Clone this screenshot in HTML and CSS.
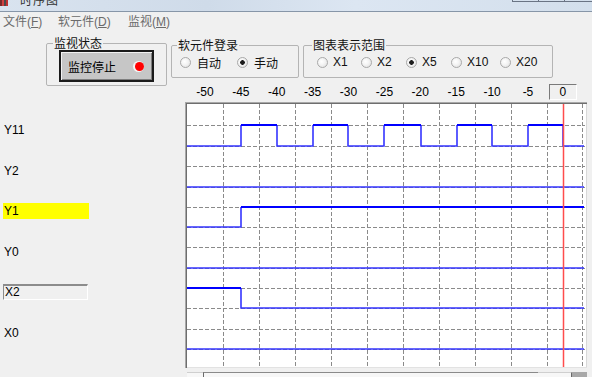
FILE: index.html
```html
<!DOCTYPE html>
<html>
<head>
<meta charset="utf-8">
<link rel="stylesheet" href="styles.css">
</head>
<body>
<div class="win">
  <div class="titlebar">
    <span class="ticon"></span>
    <span class="ttext">时序图</span>
    <span class="tbtns"><i></i><i></i><i></i></span>
  </div>
  <div class="menu">
    <span class="m1">文件(<u>F</u>)</span>
    <span class="m2">软元件(<u>D</u>)</span>
    <span class="m3">监视(<u>M</u>)</span>
  </div>
  <div class="tools">
    <fieldset class="grp g1">
      <legend>监视状态</legend>
      <button class="mon"><span>监控停止</span><span class="led"></span></button>
    </fieldset>
    <fieldset class="grp g2">
      <legend>软元件登录</legend>
      <div class="row">
        <span class="rb"><span class="rc"></span>自动</span>
        <span class="rb"><span class="rc on"></span>手动</span>
      </div>
    </fieldset>
    <fieldset class="grp g3">
      <legend>图表表示范围</legend>
      <div class="row">
        <span class="rb"><span class="rc"></span>X1</span>
        <span class="rb"><span class="rc"></span>X2</span>
        <span class="rb"><span class="rc on"></span>X5</span>
        <span class="rb"><span class="rc"></span>X10</span>
        <span class="rb"><span class="rc"></span>X20</span>
      </div>
    </fieldset>
  </div>
  <div class="main">
    <div class="names">
      <div class="nm">Y11</div>
      <div class="nm">Y2</div>
      <div class="nm sel">Y1</div>
      <div class="nm">Y0</div>
      <div class="nm box">X2</div>
      <div class="nm">X0</div>
    </div>
    <div class="chart">
      <div class="axis">
        <span>-50</span><span>-45</span><span>-40</span><span>-35</span><span>-30</span>
        <span>-25</span><span>-20</span><span>-15</span><span>-10</span><span>-5</span>
        <div class="zero">0</div>
      </div>
      <svg class="plot" width="404" height="266" viewBox="0 0 404 266">
        <rect x="2" y="2" width="399" height="263" fill="#ffffff"/>
        <rect x="0" y="0" width="1" height="266" fill="#a8a8a8"/>
        <rect x="1" y="1" width="1" height="265" fill="#6e6e6e"/>
        <rect x="0" y="0" width="402" height="1" fill="#a8a8a8"/>
        <rect x="1" y="1" width="401" height="1" fill="#6e6e6e"/>
        <rect x="401" y="2" width="1" height="264" fill="#d8d8d8"/>
        <rect x="2" y="265" width="400" height="1" fill="#e2e2e2"/>
        <g stroke="#8a8a8a" stroke-width="1" stroke-dasharray="4 2" shape-rendering="crispEdges">
          <line x1="38.5" y1="2" x2="38.5" y2="265"/>
          <line x1="74.5" y1="2" x2="74.5" y2="265"/>
          <line x1="110.5" y1="2" x2="110.5" y2="265"/>
          <line x1="146.5" y1="2" x2="146.5" y2="265"/>
          <line x1="182.5" y1="2" x2="182.5" y2="265"/>
          <line x1="218.5" y1="2" x2="218.5" y2="265"/>
          <line x1="254.5" y1="2" x2="254.5" y2="265"/>
          <line x1="290.5" y1="2" x2="290.5" y2="265"/>
          <line x1="326.5" y1="2" x2="326.5" y2="265"/>
          <line x1="362.5" y1="2" x2="362.5" y2="265"/>
          <line x1="397.5" y1="2" x2="397.5" y2="265"/>
          <line x1="2" y1="23.5" x2="400" y2="23.5"/>
          <line x1="2" y1="44.5" x2="400" y2="44.5"/>
          <line x1="2" y1="64.5" x2="400" y2="64.5"/>
          <line x1="2" y1="85.5" x2="400" y2="85.5"/>
          <line x1="2" y1="105.5" x2="400" y2="105.5"/>
          <line x1="2" y1="125.5" x2="400" y2="125.5"/>
          <line x1="2" y1="145.5" x2="400" y2="145.5"/>
          <line x1="2" y1="166.5" x2="400" y2="166.5"/>
          <line x1="2" y1="186.5" x2="400" y2="186.5"/>
          <line x1="2" y1="206.5" x2="400" y2="206.5"/>
          <line x1="2" y1="227.5" x2="400" y2="227.5"/>
          <line x1="2" y1="247.5" x2="400" y2="247.5"/>
        </g>
        <g fill="none" stroke="#3535ff" stroke-width="1.6">
          <path d="M2 44 H56 V23 M92 23 V44 H128 V23 M163 23 V44 H199 V23 M236 23 V44 H272 V23 M307 23 V44 H343 V23 M378 23 V44 H399"/>
          <path d="M2 85 H399"/>
          <path d="M2 125 H56 V105"/>
          <path d="M2 166 H399"/>
          <path d="M56 186 V206 H399"/>
          <path d="M2 247 H399"/>
        </g>
        <g fill="none" stroke="#0000ff" stroke-width="2.2">
          <path d="M56 23 H92 M128 23 H163 M199 23 H236 M272 23 H307 M343 23 H378"/>
          <path d="M56 105 H399"/>
          <path d="M2 186 H56"/>
        </g>
        <line x1="378.5" y1="2" x2="378.5" y2="265" stroke="#ff4d4d" stroke-width="1.5"/>
      </svg>
      <div class="hs">
        <span class="hs1"></span><span class="hs2"></span><span class="hs3"></span><span class="hs4"></span>
      </div>
    </div>
  </div>
</div>
</body>
</html>
```
FILE: styles.css
```css
html, body {
  margin: 0;
  padding: 0;
}
body {
  width: 611px;
  height: 384px;
  background: #ffffff;
  overflow: hidden;
  font-family: "Liberation Sans", "Noto Sans CJK SC", sans-serif;
  font-size: 12px;
  color: #000;
}
.win {
  width: 592px;
  height: 377px;
  background: #f0f0f0;
  overflow: hidden;
}
.titlebar {
  height: 11px;
  border-bottom: 1px solid #8796a8;
  background: linear-gradient(90deg, #d9e3ef 0%, #cfdbe9 35%, #dce6f2 60%, #d3dfec 100%);
  display: flex;
  align-items: flex-start;
  overflow: hidden;
}
.ticon {
  width: 8px;
  height: 6px;
  background: linear-gradient(90deg, #7a2a2a 0 2px, #d04040 2px 4px, #4a4a4a 4px 6px, #c03030 6px 8px);
  flex: none;
}
.ttext {
  margin-left: 12px;
  margin-top: -7px;
  font-family: "Noto Sans CJK SC", sans-serif;
  font-size: 12px;
  line-height: 14px;
  color: #333;
  letter-spacing: 1px;
}
.tbtns {
  margin-left: auto;
  display: flex;
}
.tbtns i {
  display: block;
  width: 25px;
  height: 1px;
  border-bottom: 1px solid #6a7484;
  border-left: 1px solid #6a7484;
}
.tbtns i:last-child {
  width: 27px;
}
.menu {
  height: 20px;
  line-height: 20px;
  display: flex;
  padding-left: 3px;
  color: #6b6b6b;
  font-family: "Liberation Sans", "Noto Sans CJK SC", sans-serif;
}
.menu u {
  text-decoration: underline;
}
.m1 { width: 55px; }
.m2 { width: 70px; }
.tools {
  height: 52px;
  box-sizing: border-box;
  padding-top: 4px;
  display: flex;
  align-items: flex-start;
}
.grp {
  margin: 0;
  padding: 0;
  border: 1px solid #b4b4b4;
  border-radius: 2px;
  box-sizing: border-box;
  min-width: 0;
}
.grp legend {
  padding: 0 1px;
  font-family: "Noto Sans CJK SC", sans-serif;
  font-size: 12px;
  line-height: 14px;
  color: #111;
}
.g1 {
  margin-left: 46px;
  width: 121px;
  height: 50px;
  padding-left: 12px;
}
.g1 legend { margin-left: -6px; }
.g2 {
  margin-left: 4px;
  margin-top: 2px;
  width: 128px;
  height: 40px;
  padding: 3px 0 0 8px;
}
.g2 legend { margin-left: -3px; }
.g3 {
  margin-left: 4px;
  margin-top: 2px;
  width: 250px;
  height: 40px;
  padding: 3px 0 0 13px;
}
.g3 legend { margin-left: -5px; }
.row {
  display: flex;
  align-items: center;
  height: 14px;
}
.rb {
  display: flex;
  align-items: center;
  flex: none;
  font-family: "Liberation Sans", "Noto Sans CJK SC", sans-serif;
  color: #111;
}
.g2 .rb { width: 57px; }
.g2 .rc { margin-right: 6px; }
.g3 .rb:nth-child(1) { width: 44px; }
.g3 .rb:nth-child(2) { width: 45px; }
.g3 .rb:nth-child(3) { width: 45px; }
.g3 .rb:nth-child(4) { width: 49px; }
.g3 .rc { margin-right: 5px; }
.rc {
  width: 11px;
  height: 11px;
  box-sizing: border-box;
  border-radius: 50%;
  border: 1px solid #a9a9a9;
  background: radial-gradient(circle at 40% 40%, #ffffff 0, #f4f4f4 40%, #dcdcdc 100%);
  flex: none;
}
.rc.on {
  background: radial-gradient(circle, #1c1c1c 0, #1c1c1c 2px, rgba(0,0,0,0) 2.6px), radial-gradient(circle at 40% 40%, #ffffff 0, #f4f4f4 40%, #dcdcdc 100%);
}
.mon {
  margin: 0;
  width: 95px;
  height: 32px;
  box-sizing: border-box;
  border: 2px solid #1b1b1b;
  background: #c6c6c6;
  box-shadow: inset 1px 1px 0 #f2f2f2, inset -1px -1px 0 #7e7e7e;
  display: flex;
  align-items: center;
  padding: 0 8px 0 7px;
  font-family: "Noto Sans CJK SC", sans-serif;
  font-size: 12px;
  color: #000;
}
.led {
  margin-left: auto;
  width: 9px;
  height: 9px;
  border-radius: 50%;
  background: #ff0000;
  box-shadow: -1px 0 0 1px #f4f4f4;
}
.main {
  display: flex;
  height: 293px;
}
.names {
  width: 185px;
  flex: none;
  box-sizing: border-box;
  padding-top: 38px;
  display: grid;
  grid-auto-rows: 16px;
  row-gap: 24.6px;
  align-content: start;
}
.nm {
  line-height: 16px;
  padding-left: 4px;
}
.nm.sel {
  background: #ffff00;
  margin-left: 3px;
  width: 86px;
  box-sizing: border-box;
  padding-left: 1px;
}
.nm.box {
  margin-left: 3px;
  width: 85px;
  box-sizing: border-box;
  border-top: 2px solid #8c8c8c;
  border-left: 1px solid #8c8c8c;
  border-right: 1px solid #ffffff;
  border-bottom: 1px solid #ffffff;
  padding-left: 1px;
  line-height: 13px;
}
.chart {
  width: 404px;
  flex: none;
  display: flex;
  flex-direction: column;
}
.axis {
  height: 18px;
  display: flex;
  align-items: flex-start;
  padding-left: 2px;
}
.axis span {
  width: 35.9px;
  flex: none;
  text-align: center;
  line-height: 16px;
}
.zero {
  margin-left: 3px;
  width: 28px;
  height: 16px;
  box-sizing: border-box;
  border-top: 1px solid #7a7a7a;
  border-left: 1px solid #7a7a7a;
  border-right: 1px solid #ffffff;
  border-bottom: 1px solid #ffffff;
  text-align: center;
  line-height: 14px;
}
.plot {
  display: block;
}
.hs {
  height: 9px;
  box-sizing: border-box;
  padding: 4px 0 0 2px;
  display: flex;
}
.hs span {
  display: block;
  height: 5px;
  box-sizing: border-box;
  background: #f7f7f7;
}
.hs1 { width: 16px; border-top: 1px solid #cfcfcf; }
.hs2 { width: 335px; border-top: 1px solid #8a8a8a; border-left: 1px solid #6a6a6a; }
.hs3 { width: 34px; border-top: 1px solid #cfcfcf; border-right: 1px solid #6a6a6a; }
.hs4 { width: 15px; background: #a8a8a8 !important; }
```
